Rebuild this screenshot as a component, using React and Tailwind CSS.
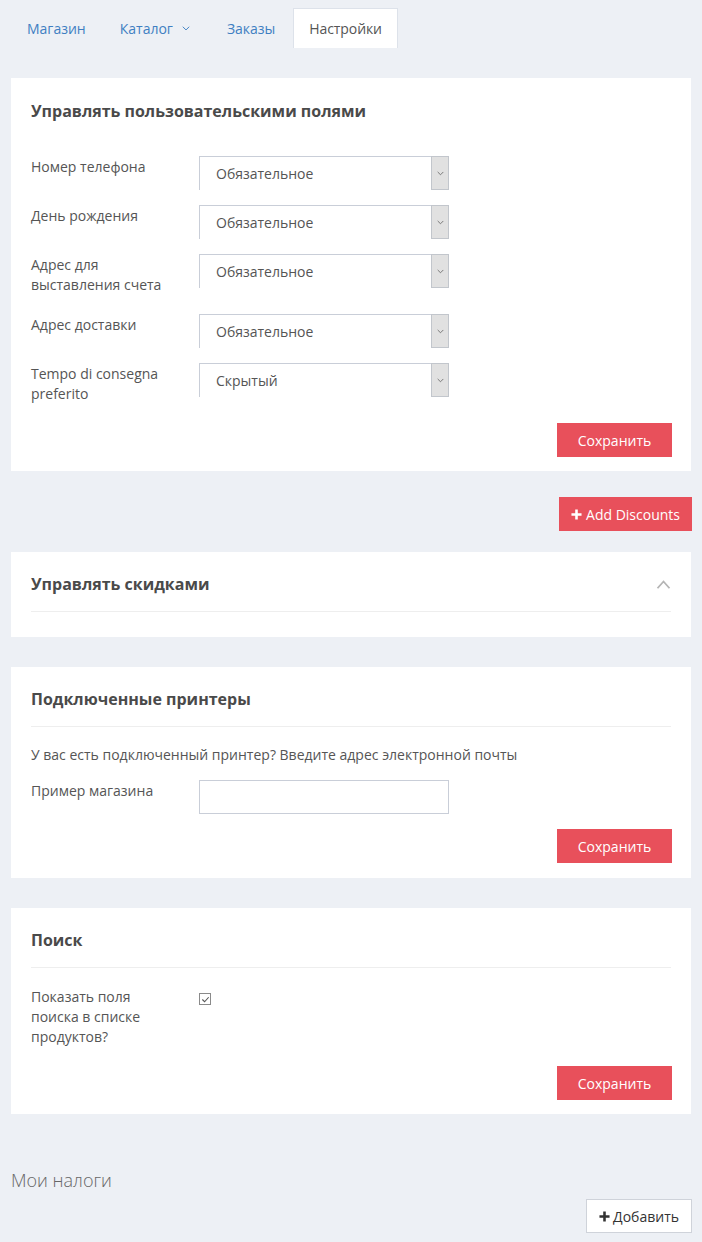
import React from 'react';

const font = { fontFamily: '"Open Sans", "Liberation Sans", sans-serif' };

function Chevron({ up = false, className = '' }) {
    return (
        <svg viewBox="0 0 10 6" className={className} fill="none" stroke="currentColor" strokeWidth="1.2">
            {up ? <path d="M1 5.5 L5 1 L9 5.5" /> : <path d="M1 0.8 L5 4.8 L9 0.8" />}
        </svg>
    );
}

function Plus({ className = '' }) {
    return (
        <svg viewBox="0 0 12 12" className={className} fill="currentColor">
            <path d="M4.6 0.5h2.8v4.1h4.1v2.8H7.4v4.1H4.6V7.4H0.5V4.6h4.1z" />
        </svg>
    );
}

function SelectBox({ value }) {
    return (
        <div className="w-[250px] h-[34px] flex border-t border-l border-[#c9ced8] bg-white">
            <div className="flex-1 pl-4 pt-[7px] text-[14px] leading-5 text-[#555]">{value}</div>
            <div className="w-[18px] h-[34px] -mt-px bg-[#e1e1e1] border border-[#c2c6cc] flex items-center justify-center text-[#666]">
                <Chevron className="w-[7px] h-[5px]" />
            </div>
        </div>
    );
}

function Row({ label, children, labelClass = 'pr-3' }) {
    return (
        <div className="flex items-start mb-[15px]">
            <div className={'w-[168px] pt-px pb-[4px] text-[14px] leading-5 text-[#555] ' + labelClass}>{label}</div>
            {children}
        </div>
    );
}

function SaveButton() {
    return (
        <div className="flex justify-end -mr-px">
            <button className="w-[115px] h-[34px] bg-[#e8505b] text-white text-[14px]">Сохранить</button>
        </div>
    );
}

function CardHeader({ title, children }) {
    return (
        <div className="flex items-center justify-between pb-4 border-b border-[#eeeeee]">
            <h3 className="text-[16px] leading-[22px] font-bold text-[#4a4a4a]">{title}</h3>
            {children}
        </div>
    );
}

export default function App() {
    const fields = [
        ['Номер телефона', 'Обязательное'],
        ['День рождения', 'Обязательное'],
        ['Адрес для выставления счета', 'Обязательное'],
        ['Адрес доставки', 'Обязательное'],
        ['Tempo di consegna preferito', 'Скрытый'],
    ];

    return (
        <div style={font} className="min-h-[1242px] bg-[#edf0f5] px-[11px]">
            {/* tabs */}
            <div className="flex items-stretch pt-2 h-[48px] text-[14px] gap-[2px]">
                <div className="px-4 flex items-center text-[#3f7fc2]">Магазин</div>
                <div className="px-4 flex items-center text-[#3f7fc2]">
                    Каталог
                    <Chevron className="w-[8px] h-[5px] ml-[9px] mt-px text-[#3f7fc2]" />
                </div>
                <div className="px-4 flex items-center text-[#3f7fc2] ml-[3px]">Заказы</div>
                <div className="px-[15px] flex items-center bg-white border border-b-0 border-[#dde2ea] text-[#555] tracking-[-0.1px]">Настройки</div>
            </div>

            {/* custom fields */}
            <div className="mt-[30px] bg-white px-5 pt-[22px] pb-[14px]">
                <h3 className="text-[16px] leading-[22px] font-bold text-[#4a4a4a] mb-[34px]">Управлять пользовательскими полями</h3>
                {fields.map(([label, value]) => (
                    <Row key={label} label={label}>
                        <SelectBox value={value} />
                    </Row>
                ))}
                <SaveButton />
            </div>

            <div className="flex justify-end mt-[26px] -mr-px">
                <button className="h-[34px] px-3 bg-[#e8505b] text-white text-[14px] flex items-center gap-[4px]">
                    <Plus className="w-[11px] h-[11px]" />
                    Add Discounts
                </button>
            </div>

            {/* discounts */}
            <div className="mt-[21px] bg-white px-5 pt-[21px] pb-[25px]">
                <CardHeader title="Управлять скидками">
                    <Chevron up className="w-[15px] h-[9px] text-[#b5b5b5]" />
                </CardHeader>
            </div>

            {/* printers */}
            <div className="mt-[30px] bg-white px-5 pt-[21px] pb-[15px]">
                <CardHeader title="Подключенные принтеры" />
                <p className="mt-[18px] text-[14px] leading-5 text-[#555]">У вас есть подключенный принтер? Введите адрес электронной почты</p>
                <div className="mt-[15px]">
                    <Row label="Пример магазина">
                        <input className="w-[250px] h-[34px] border border-[#c9ced8] outline-none px-3 text-[14px]" />
                    </Row>
                </div>
                <SaveButton />
            </div>

            {/* search */}
            <div className="mt-[30px] bg-white px-5 pt-[21px] pb-[14px]">
                <CardHeader title="Поиск" />
                <div className="mt-[18px] flex items-start mb-[15px]">
                    <div className="w-[168px] pr-[30px] pt-px pb-[4px] text-[14px] leading-5 text-[#555]">Показать поля поиска в списке продуктов?</div>
                    <div className="mt-[7px] w-[12px] h-[12px] border border-[#8a8a8a] flex items-center justify-center">
                        <svg viewBox="0 0 10 10" className="w-[9px] h-[9px]" fill="none" stroke="#555" strokeWidth="1.2">
                            <path d="M1.5 5 L4 7.5 L8.5 2.5" />
                        </svg>
                    </div>
                </div>
                <SaveButton />
            </div>

            {/* taxes */}
            <div className="mt-[54px] text-[18px] leading-6 font-light text-[#666]">Мои налоги</div>
            <div className="flex justify-end mt-[7px] -mr-px pb-2">
                <button className="h-[34px] px-3 bg-white border border-[#cfd3da] text-[#333] text-[14px] flex items-center gap-[3px]">
                    <Plus className="w-[11px] h-[11px]" />
                    Добавить
                </button>
            </div>
        </div>
    );
}
